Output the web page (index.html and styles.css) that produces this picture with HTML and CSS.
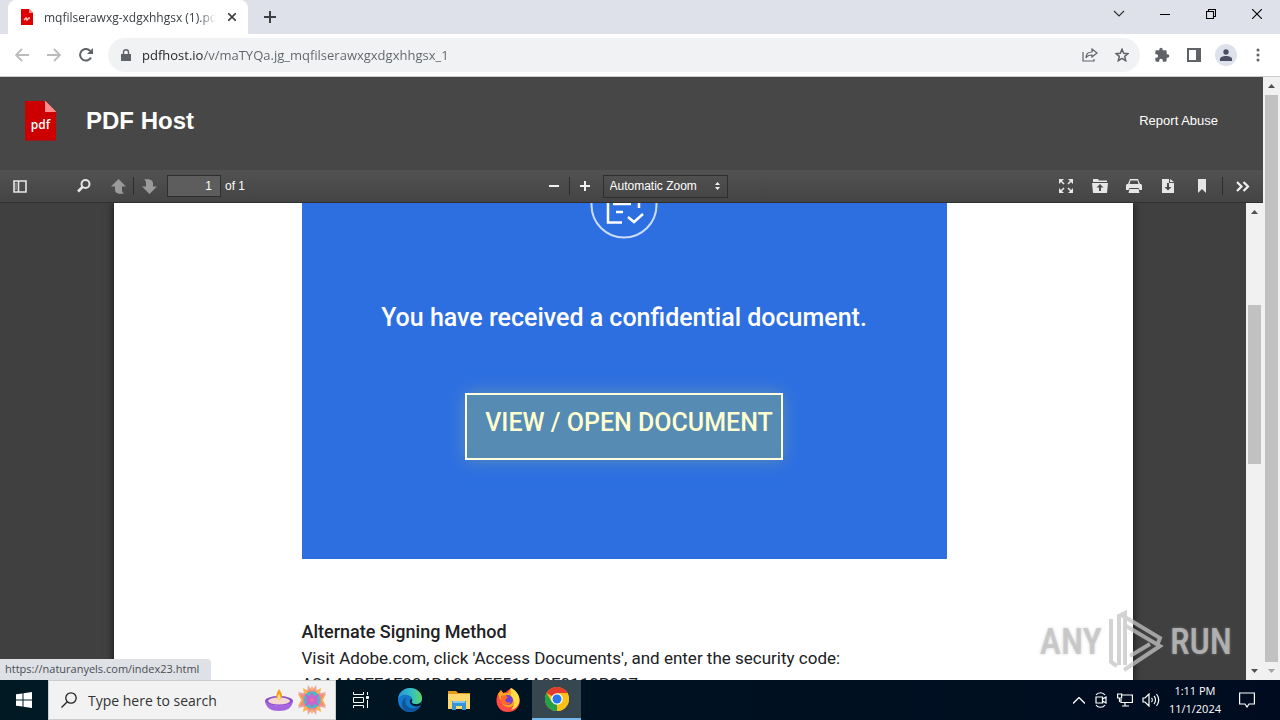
FILE: index.html
```
<!DOCTYPE html>
<html lang="en">
<head>
  <meta charset="UTF-8">
  <meta name="viewport" content="width=device-width, initial-scale=1.0">
  <title>mqfilserawxg-xdgxhhgsx (1).pdf</title>
  <link rel="stylesheet" href="styles.css">
</head>
<body>
  <!-- Tab strip -->
  <div class="tab-strip">
    <div class="tab">
      <svg class="tab-icon" width="14" height="16" viewBox="0 0 14 16"><path fill="#d00" d="M1 0h8l4 4v12H1z"/><path fill="#f88" d="M9 0l4 4H9z"/><path fill="none" stroke="#fcc" stroke-width="1.4" d="M4 11l2-2 1 2 2-2 1 0"/></svg>
      <span class="tab-title">mqfilserawxg-xdgxhhgsx (1).pdf</span>
      <button class="icon-btn" aria-label="Close tab"><svg width="8" height="8" viewBox="0 0 8 8" stroke="#3c4043" stroke-width="1.6"><path d="M0 0l8 8M8 0L0 8"/></svg></button>
    </div>
    <button class="icon-btn new-tab" aria-label="New tab"><svg width="12" height="12" viewBox="0 0 12 12" stroke="#3c4043" stroke-width="2"><path d="M6 0v12M0 6h12"/></svg></button>
    <div class="window-buttons">
      <button class="icon-btn" aria-label="Search tabs"><svg width="12" height="12" viewBox="0 0 12 12" fill="none" stroke="#333" stroke-width="1.2"><path d="M1 3l5 5 5-5"/></svg></button>
      <button class="icon-btn" aria-label="Minimize"><svg width="10" height="10" viewBox="0 0 10 10" stroke="#000"><path d="M0 5.5h10"/></svg></button>
      <button class="icon-btn" aria-label="Restore"><svg width="10" height="10" viewBox="0 0 10 10" fill="none" stroke="#000" stroke-width="1.1"><path d="M.5 2.5h7v7h-7zM2.5 2.5v-2h7v7h-2"/></svg></button>
      <button class="icon-btn" aria-label="Close"><svg width="10" height="10" viewBox="0 0 10 10" stroke="#000" stroke-width="1.1"><path d="M0 0l10 10M10 0L0 10"/></svg></button>
    </div>
  </div>

  <!-- Browser toolbar -->
  <div class="browser-bar">
    <button class="icon-btn" aria-label="Back"><svg width="14" height="14" viewBox="0 0 14 14" fill="none" stroke="#babcbe" stroke-width="1.8"><path d="M14 7H1M7 1L1 7l6 6"/></svg></button>
    <button class="icon-btn" aria-label="Forward"><svg width="14" height="14" viewBox="0 0 14 14" fill="none" stroke="#babcbe" stroke-width="1.8"><path d="M0 7h13M7 1l6 6-6 6"/></svg></button>
    <button class="icon-btn" aria-label="Reload"><svg width="14" height="14" viewBox="0 0 14 14" fill="none" stroke="#5f6368" stroke-width="2"><path d="M12 9.5A5.8 5.8 0 1 1 11.3 3"/><path fill="#5f6368" stroke="none" d="M14 0v6H8z"/></svg></button>
    <div class="address">
      <svg width="10" height="12" viewBox="0 0 10 12"><path fill="#5f6368" d="M0 5h10v7H0z"/><path fill="none" stroke="#5f6368" stroke-width="1.4" d="M2.5 5V3a2.5 2.3 0 0 1 5 0v2"/></svg>
      <input class="url" type="text" aria-label="Address" value="pdfhost.io/v/maTYQa.jg_mqfilserawxgxdgxhhgsx_1">
      <button class="icon-btn" aria-label="Share"><svg width="16" height="14" viewBox="0 0 16 14" fill="none" stroke="#5f6368" stroke-width="1.2"><path d="M1 4v9h11v-2M4 10c0-4 2-6 6-6V1l5 4-5 4V7c-3 0-5 1-6 3z"/></svg></button>
      <button class="icon-btn" aria-label="Bookmark"><svg width="14" height="14" viewBox="0 0 14 14" fill="none" stroke="#5f6368" stroke-width="1.5"><path d="M7 1.2l1.7 4 4.3.4-3.3 2.8 1 4.3L7 10.4l-3.7 2.3 1-4.3L1 5.6l4.300-.4z"/></svg></button>
    </div>
    <button class="icon-btn" aria-label="Extensions"><svg width="16" height="16" viewBox="0 0 24 24" fill="#5f6368"><path d="M20.5 11H19V7a2 2 0 0 0-2-2h-4V3.500a2.500 2.500 0 0 0-5 0V5H4a2 2 0 0 0-2 2v3.800h1.500a2.700 2.700 0 0 1 0 5.400H2V20a2 2 0 0 0 2 2h3.800v-1.500a2.700 2.700 0 0 1 5.400 0V22H17a2 2 0 0 0 2-2v-4h1.500a2.500 2.500 0 0 0 0-5z"/></svg></button>
    <button class="icon-btn" aria-label="Side panel"><svg width="14" height="14" viewBox="0 0 14 14" fill="none" stroke="#5f6368" stroke-width="2"><path d="M1 1h12v12H1z"/><path fill="#5f6368" d="M10 1h3v12h-3z"/></svg></button>
    <button class="icon-btn profile" aria-label="Profile"><svg width="12" height="12" viewBox="0 0 12 12" fill="#4a4d63"><circle cx="6" cy="3" r="2.7"/><path d="M0 12V10c0-2 3-3 6-3s6 1 6 3v2z"/></svg></button>
    <button class="icon-btn" aria-label="Menu"><svg width="4" height="14" viewBox="0 0 4 14" fill="#5f6368"><circle cx="2" cy="2" r="1.5"/><circle cx="2" cy="7" r="1.5"/><circle cx="2" cy="12" r="1.5"/></svg></button>
  </div>

  <!-- Web page -->
  <div class="page">
    <div class="site">
      <header class="site-header">
        <div class="site-logo"><span>pdf</span></div>
        <h1>PDF Host</h1>
        <a class="report" href="#">Report Abuse</a>
      </header>

      <div class="viewer-bar">
        <div class="bar-left">
          <button class="icon-btn" aria-label="Toggle sidebar"><svg width="14" height="13" viewBox="0 0 14 13" fill="none" stroke="#e6e6e6" stroke-width="1.6"><path d="M1 1h12v11H1zM5.5 1v11"/><path stroke-width="1" stroke="#aaa" d="M3 3v7"/></svg></button>
          <button class="icon-btn find" aria-label="Find"><svg width="14" height="14" viewBox="0 0 14 14" fill="none" stroke="#e6e6e6" stroke-width="2"><circle cx="8.5" cy="5" r="4"/><path stroke-width="2.6" d="M5.500 8L1 12.500"/></svg></button>
          <button class="icon-btn" aria-label="Previous page"><svg width="15" height="15" viewBox="0 0 15 15" fill="#9a9a9a"><path d="M7.500 0L15 7.500h-4V11c0 2 1 3 2 3.500-4 1-9 0-9-3.500V7.500H0z"/></svg></button>
          <span class="split"></span>
          <button class="icon-btn" aria-label="Next page"><svg width="15" height="15" viewBox="0 0 15 15" fill="#9a9a9a"><path d="M7.500 15L0 7.500h4V4c0-2-1-3-2-3.500 4-1 9 0 9 3.500v3.500h4z"/></svg></button>
          <input class="page-number" type="text" aria-label="Page" value="1">
          <span>of 1</span>
        </div>
        <div class="bar-middle">
          <button class="icon-btn" aria-label="Zoom out"><svg width="10" height="10" viewBox="0 0 10 10" stroke="#f0f0f0" stroke-width="2"><path d="M0 5h10"/></svg></button>
          <span class="split"></span>
          <button class="icon-btn" aria-label="Zoom in"><svg width="10" height="10" viewBox="0 0 10 10" stroke="#f0f0f0" stroke-width="2"><path d="M0 5h10M5 0v10"/></svg></button>
          <div class="zoom">
            <select aria-label="Zoom level"><option>Automatic Zoom</option></select>
            <svg width="5" height="8" viewBox="0 0 5 8" fill="#f0f0f0"><path d="M0 3l2.500-3L5 3zM0 5h5L2.500 8z"/></svg>
          </div>
        </div>
        <div class="bar-right">
          <button class="icon-btn" aria-label="Presentation mode"><svg width="14" height="14" viewBox="0 0 14 14" fill="#e6e6e6" stroke="#e6e6e6" stroke-width="1.6"><path stroke="none" d="M0 0h5L0 5zM14 0v5L9 0zM0 14V9l5 5zM14 14H9l5-5z"/><path d="M1 1l4 4M13 1L9 5M1 13l4-4M13 13L9 9"/></svg></button>
          <button class="icon-btn" aria-label="Open file"><svg width="16" height="14" viewBox="0 0 16 14" fill="#e6e6e6"><path d="M1 0h5l1 1.500h8V3H1z"/><path fill-rule="evenodd" d="M0 4h16l-1 10H1zM8 5L4.500 8.500H7V12h2V8.500h2.500z"/></svg></button>
          <button class="icon-btn" aria-label="Print"><svg width="16" height="14" viewBox="0 0 16 14" fill="#e6e6e6"><path fill-rule="evenodd" d="M4 0h8l2 5h1l1 1v5h-2.500l-1-2h-9l-1 2H0V6l1-1h1zM4.500 1.500L3.500 5h9l-1-3.500z"/><path d="M3.500 10h9l1 4h-11z"/></svg></button>
          <button class="icon-btn" aria-label="Download"><svg width="12" height="14" viewBox="0 0 12 14" fill="#e6e6e6"><path fill-rule="evenodd" d="M0 0h7v4h5v10H0zM5 4v4H2.500L6 11.500 9.500 8H7V4z"/><path d="M8 0l4 3H8z"/></svg></button>
          <button class="icon-btn" aria-label="Bookmark view"><svg width="8" height="14" viewBox="0 0 8 14" fill="#e6e6e6"><path d="M0 0h8v14L4 10l-4 4z"/></svg></button>
          <span class="split"></span>
          <button class="icon-btn" aria-label="Tools"><svg width="14" height="11" viewBox="0 0 14 11" fill="none" stroke="#f0f0f0" stroke-width="2.2"><path d="M1 1l4.500 4.500L1 10M7.500 1L12 5.500 7.500 10"/></svg></button>
        </div>
      </div>

      <div class="viewer">
        <div class="viewer-canvas">
          <div class="pdf-page">
            <section class="notice">
              <svg class="notice-icon" width="68" height="36" viewBox="0 0 68 36" fill="none" stroke="#fff"><circle cx="34" cy="2" r="32.5" stroke="#c9dcfb" stroke-width="2"/><path stroke-width="2.5" d="M18 0v19.500h14M23 1h18M26 9h7M49 0v5M38 14l6 5 9-8"/></svg>
              <h2>You have received a confidential document.</h2>
              <a class="open-doc" href="#">VIEW / OPEN DOCUMENT</a>
            </section>
            <section class="method">
              <h3>Alternate Signing Method</h3>
              <p>Visit Adobe.com, click 'Access Documents', and enter the security code:</p>
              <p>A2A4ABFE1F904BA0A0FF516A0F0110B007</p>
            </section>
          </div>
        </div>
        <div class="scrollbar inner">
          <svg width="7" height="4" viewBox="0 0 7 4" fill="#505050"><path d="M0 4l3.500-4L7 4z"/></svg>
          <div class="track"><div class="thumb"></div></div>
          <svg width="7" height="4" viewBox="0 0 7 4" fill="#505050"><path d="M0 0h7L3.500 4z"/></svg>
        </div>
      </div>
    </div>
    <div class="scrollbar outer">
      <svg width="7" height="4" viewBox="0 0 7 4" fill="#505050"><path d="M0 4l3.500-4L7 4z"/></svg>
      <div class="track"><div class="thumb"></div></div>
      <svg width="7" height="4" viewBox="0 0 7 4" fill="#a3a3a3"><path d="M0 0h7L3.500 4z"/></svg>
    </div>
    <div class="status">https://naturanyels.com/index23.html</div>
    <div class="watermark">
      <span>ANY</span>
      <svg width="60" height="64" viewBox="0 0 60 64" fill="none" stroke="#c4c4c4" stroke-opacity=".75" stroke-width="4"><path d="M5 9v43l6 4M13 55V6l6-3v52M14 4l40 24-2 5M20 16l34 20-36 24M24 46l20-12"/></svg>
      <span>RUN</span>
    </div>
  </div>

  <!-- Taskbar -->
  <footer class="taskbar">
    <button class="icon-btn start" aria-label="Start"><svg width="16" height="16" viewBox="0 0 16 16" fill="#fff"><path d="M0 2.300L6.500 1.400v6.100H0zM7.500 1.200L16 0v7.500H7.500zM0 8.500h6.500v6.100L0 13.700zM7.500 8.500H16V16l-8.500-1.200z"/></svg></button>
    <div class="search">
      <svg width="16" height="16" viewBox="0 0 16 16" fill="none" stroke="#222" stroke-width="1.3"><circle cx="10" cy="6" r="5.2"/><path d="M6.300 9.700L.5 15.500"/></svg>
      <input type="text" aria-label="Search" placeholder="Type here to search">
      <svg width="28" height="24" viewBox="0 0 28 24"><ellipse cx="14" cy="13" rx="14" ry="5" fill="#8c50c8"/><path d="M0 13c1 7 6 10 14 10s13-3 14-10c-5 6-23 6-28 0z" fill="#a566e0"/><ellipse cx="14" cy="13" rx="11" ry="3.5" fill="#f5d9d0"/><path d="M14 1c4 6 4 8 0 11-4-3-3-6 0-11z" fill="#f6a01c"/><path d="M14 6c2 3 2 4 0 6-2-2-2-3 0-6z" fill="#ffe275"/></svg>
      <svg width="30" height="30" viewBox="0 0 30 30"><path fill="#f7b650" d="M15 1l3 5 6-3-1 7 6-1-3 6 3 6-6-1 1 7-6-3-3 5-3-5-6 3 1-7-6 1 3-6-3-6 6 1-1-7 6 3z"/><path fill="#ec7f8b" d="M11 0l4 6 4-6 1 9 9-2-5 8 5 8-9-2-1 9-4-6-4 6-1-9-9 2 5-8-5-8 9 2z" opacity=".75"/><circle cx="15" cy="15" r="8.5" fill="#49b9c6"/><path fill="#c665ce" d="M15 7l2 4 5-2-2 5 3 1-3 1 2 5-5-2-2 4-2-4-5 2 2-5-3-1 3-1-2-5 5 2z"/><circle cx="15" cy="15" r="2" fill="#f36aa0"/></svg>
    </div>
    <button class="task" aria-label="Task view"><svg width="18" height="16" viewBox="0 0 18 16" fill="none" stroke="#fff"><path d="M1.500 0v2.500h10V0M1.500 5.500h10v5h-10zM1.500 16v-2.500h10V16M15.500 0v3M15.500 8v8"/><path fill="#fff" d="M14.500 4.500h2v2h-2z"/></svg></button>
    <button class="task" aria-label="Edge"><svg width="24" height="24" viewBox="0 0 24 24"><defs><linearGradient id="edge-top"><stop offset="0" stop-color="#2396d8"/><stop offset=".6" stop-color="#36c2c0"/><stop offset="1" stop-color="#5ed65e"/></linearGradient></defs><circle cx="12" cy="12" r="12" fill="#1378ca"/><path fill="url(#edge-top)" d="M0 11C1 4 6 0 12 0c7 0 12 5 12 10 0 4-3 6-6 6-3 0-5-1-4-3 2-5-5-7-9-6-3 1-4 2-5 4z"/><path fill="#0d559c" d="M9 9c-3 3-2 9 3 11 4 1 7 0 10-2-3 5-9 7-14 5-6-3-5-12 1-14z"/><path fill="#001923" d="M13 11c-2 2-1 6 3 7 3 1 5 0 7-1l1 -4c-2 3-5 3.500-7 3-3 0-4-2-3-3 1-1 0-2-1-2z"/></svg></button>
    <button class="task" aria-label="File Explorer"><svg width="22" height="19" viewBox="0 0 22 19"><path fill="#e69b20" d="M0 0h8l2 2h12v5H0z"/><path fill="#ffd76a" d="M0 3h22v15H0z"/><path fill="#3596d6" d="M4 10h14v9h-4v-4H8v4H4z"/><path fill="#8ac7ed" d="M5 10h12v2H5z"/></svg></button>
    <button class="task" aria-label="Firefox"><svg width="24" height="24" viewBox="0 0 24 24"><path fill="#ff4a46" d="M2 6l3-4 2 3 3-1 5-4 4 5 4 4c3 8-3 15-11 15C2 24-2 14 2 6z"/><path fill="#ffa31f" d="M15 0c0 4 7 6 5 13-1 4-5 7-9 6-5-1-6-5-4-7H4L2 6l3-4 2 3 5 0z"/><circle cx="12" cy="12" r="5" fill="#7340d4"/><path fill="#ffde45" d="M15 0c5 2 10 8 8 15-2 4-4 6-8 7 6-7 2-12 0-14z"/><path fill="#ff6b28" d="M5 8c3-1 5 0 7 1l-3 3c1 3 4 3 6 2-2 4-9 4-10-1z"/></svg></button>
    <button class="task active" aria-label="Chrome"><svg width="24" height="24" viewBox="0 0 24 24"><circle cx="12" cy="12" r="12" fill="#fbc116"/><path fill="#e33b2e" d="M12 12L1.600 6A12 12 0 0 1 22.400 6z"/><path fill="#269f4b" d="M12 12l0 12A12 12 0 0 1 1.600 6l5.200 9z"/><path fill="#fbc116" d="M12 24l5-9-5-9h10.400A12 12 0 0 1 12 24z"/><circle cx="12" cy="12" r="5.8" fill="#fff"/><circle cx="12" cy="12" r="4.5" fill="#2878ea"/></svg></button>
    <div class="tray">
      <svg width="12" height="7" viewBox="0 0 12 7" fill="none" stroke="#fff" stroke-width="1.3"><path d="M0 6.500l6-6 6 6"/></svg>
      <svg width="14" height="16" viewBox="0 0 14 16" fill="none" stroke="#fff" stroke-width="1.2"><path d="M2 3c2-3 7-3 9 0M2 13c2 3 7 3 9 0M2 5h6.500v6H2zM8.500 7L12 5v6L8.500 9"/></svg>
      <svg width="16" height="14" viewBox="0 0 16 14" fill="none" stroke="#fff" stroke-width="1.2"><path d="M5 2h10.400v7.500H4V6M8 9.500V13M5 13h7M.6 1h4v4h-4zM2.500 5v4"/></svg>
      <svg width="18" height="14" viewBox="0 0 18 14" fill="none" stroke="#fff" stroke-width="1.2"><path d="M1 5h2l4-4v12L3 9H1zM9.500 5c1 1 1 3 0 4M12 3c2 2 2 6 0 8M14.500 1c3 4 3 8 0 12"/></svg>
      <div class="clock"><span>1:11 PM</span><span>11/1/2024</span></div>
      <svg width="16" height="16" viewBox="0 0 16 16" fill="none" stroke="#fff" stroke-width="1.2"><path d="M.6 1h14.800v11H10l-2 3-2-3H.6z"/></svg>
    </div>
  </footer>
</body>
</html>
```
FILE: styles.css
```
* {
  box-sizing: border-box;
}
body {
  margin: 0;
  height: 100vh;
  display: flex;
  flex-direction: column;
  overflow: hidden;
  font-family: "Open Sans", "Noto Sans", sans-serif;
  font-size: 12px;
  color: #202124;
}
svg {
  flex-shrink: 0;
}
button, input, select {
  font: inherit;
  border: 0;
  outline: 0;
  padding: 0;
  background: none;
}
a {
  color: inherit;
  text-decoration: none;
}
.icon-btn {
  display: flex;
  align-items: center;
  justify-content: center;
  flex-shrink: 0;
}

/* Tab strip */
.tab-strip {
  height: 34px;
  display: flex;
  background: #dee1e9;
  padding-left: 8px;
}
.tab {
  width: 240px;
  display: flex;
  align-items: center;
  padding: 0 12px;
  background: #fff;
  border-radius: 8px 8px 0 0;
}
.tab-icon {
  margin-right: 10px;
}
.tab-title {
  flex: 1;
  white-space: nowrap;
  overflow: hidden;
  margin-right: 12px;
  color: #3c4043;
  mask-image: linear-gradient(to right, #000 90%, transparent);
}
.new-tab {
  width: 44px;
}
.window-buttons {
  margin-left: auto;
  display: flex;
  padding-bottom: 6px;
}
.window-buttons .icon-btn {
  width: 46px;
}

/* Browser toolbar */
.browser-bar {
  height: 43px;
  display: flex;
  align-items: center;
  padding: 0 6px;
  border-bottom: 1px solid #ccc;
  background: #fff;
}
.browser-bar .icon-btn {
  width: 32px;
}
.address {
  flex: 1;
  display: flex;
  align-items: center;
  height: 34px;
  margin: 0 6px;
  padding: 0 2px 0 13px;
  border-radius: 17px;
  background: #f0f2f4;
}
.url {
  flex: 1;
  margin-left: 11px;
  font-size: 13px;
  color: transparent;
  background: linear-gradient(to right, #202124 62px, #5f6368 62px);
  background-clip: text;
}
.browser-bar .profile {
  height: 22px;
  width: 22px;
  margin: 0 5px;
  border-radius: 50%;
  background: #dee1ec;
}

/* Web page */
.page {
  flex: 1;
  min-height: 0;
  display: flex;
  position: relative;
}
.site {
  flex: 1;
  display: flex;
  flex-direction: column;
  font-family: "Liberation Sans", Arial, sans-serif;
  color: #fff;
}
.site-header {
  height: 93px;
  display: flex;
  align-items: center;
  padding: 0 45px 6px 25px;
  background: #474747;
}
.site-logo {
  width: 31px;
  height: 40px;
  padding-top: 16px;
  text-align: center;
  font: 600 12px/16px "Open Sans", sans-serif;
  background: linear-gradient(#ff8f8f, #ff8f8f) top right / 11px 11px no-repeat, #c00;
  clip-path: polygon(0 0, 20px 0, 100% 11px, 100% 100%, 0 100%);
}
.site-header h1 {
  margin: 0 0 0 30px;
  font-size: 24px;
}
.report {
  margin-left: auto;
  font-size: 13px;
}
.viewer-bar {
  height: 33px;
  display: grid;
  grid-template-columns: 1fr auto 1fr;
  align-items: center;
  padding: 0 10px;
  border-bottom: 1px solid #303030;
  background: linear-gradient(#525252, #444);
}
.bar-left, .bar-middle, .bar-right {
  display: flex;
  align-items: center;
}
.bar-left .icon-btn {
  width: 20px;
}
.bar-left .icon-btn.find {
  margin: 0 14px 0 44px;
}
.bar-middle {
  margin-left: 8px;
}
.bar-middle .icon-btn {
  width: 20px;
}
.bar-right {
  justify-content: flex-end;
}
.bar-right .icon-btn {
  width: 20px;
  margin-left: 14px;
}
.split {
  width: 1px;
  height: 18px;
  margin: 0 5px;
  background: #2d2d2d;
}
.bar-right .split {
  margin: 0 -4px 0 10px;
}
.page-number {
  width: 54px;
  height: 22px;
  margin: 0 4px 0 8px;
  padding-right: 8px;
  border: 1px solid #2e2e2e;
  background: #5d5d5d;
  color: #fff;
  text-align: right;
}
.zoom {
  display: flex;
  align-items: center;
  position: relative;
  margin-left: 8px;
}
.zoom select {
  appearance: none;
  width: 125px;
  height: 23px;
  padding-left: 6px;
  border: 1px solid #2e2e2e;
  color: #fff;
}
.zoom svg {
  position: absolute;
  right: 8px;
}
.viewer {
  flex: 1;
  min-height: 0;
  display: flex;
  background: #404040;
}
.viewer-canvas {
  flex: 1;
  overflow: hidden;
}
.pdf-page {
  max-width: 1019px;
  min-height: 100%;
  margin: 0 auto;
  padding-left: 2px;
  background: #fff;
  color: #202124;
  font-family: Roboto, sans-serif;
  box-shadow: 0 0 8px #111;
}
.notice {
  max-width: 645px;
  margin: 0 auto;
  padding-bottom: 99px;
  display: flex;
  flex-direction: column;
  align-items: center;
  background: #2d6fe1;
  color: #fff;
}
.notice h2 {
  margin: 63px 0 59px;
  font-size: 25px;
  line-height: 32px;
  font-weight: 500;
}
.open-doc {
  padding: 12px 8px 19px 18px;
  border: 2px solid #ffffe0;
  background: #568bb3;
  color: #ffffd0;
  font-size: 25px;
  line-height: 32px;
  font-weight: 500;
  box-shadow: 0 0 16px #5c91b8;
}
.method {
  max-width: 645px;
  margin: 0 auto;
  padding-top: 60px;
  font-size: 17px;
  line-height: 26px;
}
.method h3 {
  margin: 0;
  font-size: 18px;
  font-weight: 500;
}
.method p {
  margin: 0;
}

/* Scrollbars */
.scrollbar {
  width: 17px;
  display: flex;
  flex-direction: column;
  align-items: center;
  padding: 7px 2px;
  background: #f1f1f1;
}
.track {
  flex: 1;
  width: 100%;
  margin: 7px 0;
}
.thumb {
  background: #c1c1c1;
}
.inner .thumb {
  height: 36%;
  margin-top: 84px;
}
.outer .thumb {
  height: 100%;
}

.status {
  position: absolute;
  left: 0;
  bottom: 0;
  height: 21px;
  padding: 0 12px 0 5px;
  font-size: 11px;
  line-height: 20px;
  border-radius: 0 4px 0 0;
  background: #dee1e6;
  color: #4a4d51;
}
.watermark {
  position: absolute;
  right: 48px;
  bottom: 6px;
  display: flex;
  align-items: center;
  gap: 4px;
  font: 500 36px "Roboto Condensed", "Liberation Sans Narrow", "Liberation Sans", sans-serif;
  color: rgba(196, 196, 196, 0.8);
  text-shadow: 0 0 3px rgba(160, 160, 160, 0.5);
}

/* Taskbar */
.taskbar {
  height: 40px;
  display: flex;
  background: linear-gradient(to right, #001923, #000b20);
  color: #fff;
}
.start {
  width: 48px;
}
.search {
  width: 288px;
  display: flex;
  align-items: center;
  padding: 0 8px 0 12px;
  border: 1px solid #ccc;
  background: #f2f2f2;
}
.search input {
  flex: 1;
  min-width: 0;
  margin-left: 11px;
  font-size: 14px;
}
.search input::placeholder {
  color: #333;
}
.search svg + svg {
  margin-left: 4px;
}
.task {
  width: 49px;
  display: flex;
  align-items: center;
  justify-content: center;
}
.task.active {
  background: #364750;
  border-bottom: 2px solid #76b9ed;
}
.tray {
  margin-left: auto;
  display: flex;
  align-items: center;
  gap: 9px;
  padding-right: 25px;
}
.clock {
  display: flex;
  flex-direction: column;
  align-items: center;
  margin-right: 9px;
  font-size: 11px;
  line-height: 18px;
}
```
